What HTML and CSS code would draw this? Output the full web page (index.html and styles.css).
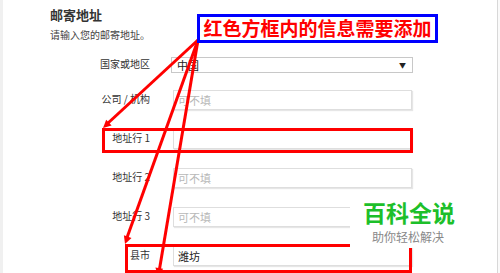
FILE: index.html
```html
<!DOCTYPE html>
<html lang="zh-CN">
<head>
    <meta charset="UTF-8">
    <title>邮寄地址</title>
    <link rel="stylesheet" href="styles.css">
</head>
<body>
<div class="page">
    <div class="content">
        <h2 class="title">邮寄地址</h2>
        <p class="desc">请输入您的邮寄地址。</p>
        <div class="form">
            <div class="row">
                <label class="label">国家或地区</label>
                <div class="select"><span>中国</span><span class="arrow">▼</span></div>
            </div>
            <div class="row">
                <label class="label">公司 / 机构</label>
                <input class="field" type="text" placeholder="可不填">
            </div>
            <div class="row">
                <label class="label">地址行 1</label>
                <input class="field" type="text">
            </div>
            <div class="row">
                <label class="label">地址行 2</label>
                <input class="field" type="text" placeholder="可不填">
            </div>
            <div class="row">
                <label class="label">地址行 3</label>
                <input class="field" type="text" placeholder="可不填">
            </div>
            <div class="row">
                <label class="label">县市</label>
                <input class="field" type="text" value="潍坊">
            </div>
        </div>
    </div>

    <!-- 标注层 -->
    <svg class="marks" width="500" height="273" viewBox="0 0 500 273">
        <g stroke="#ff0000" stroke-width="3" fill="none">
            <rect x="103.5" y="129.5" width="308" height="22"/>
            <rect x="126.5" y="245.5" width="284" height="26"/>
            <line x1="198" y1="40" x2="107" y2="124"/>
            <line x1="198" y1="40" x2="126.5" y2="239"/>
            <line x1="198" y1="40" x2="159" y2="272"/>
        </g>
        <g fill="#ff0000">
            <polygon points="103,128 111.6,125.5 106.2,119.7"/>
            <polygon points="125,244 131.5,237.9 123.9,235.2"/>
            <polygon points="158,276 163.2,268.7 155.4,267.5"/>
        </g>
    </svg>
    <div class="note">红色方框内的信息需要添加</div>
    <div class="logo">
        <div class="logo-name">百科全说</div>
        <div class="logo-sub">助你轻松解决</div>
    </div>
</div>
</body>
</html>
```

FILE: styles.css
```css
body,html{
    margin: 0;
    padding: 0;
    width: 100%;
    height: 100%;
    overflow: hidden;
    background-color: #fafafa;
}
.page{
    position: relative;
    width: 498px;
    height: 273px;
    box-sizing: border-box;
    border-left: 3px solid #f0f0f0;
    border-right: 1px solid #d8d8d8;
    background-color: #fff;
    font-family: "Noto Sans CJK SC", "Noto Sans", sans-serif;
    color: #333;
}
.content{
    padding: 6px 0 0 47px;
}
.title{
    margin: 0;
    font-size: 13px;
    line-height: 18px;
    font-weight: bold;
    color: #333;
}
.desc{
    margin: 4px 0 0;
    font-size: 10px;
    line-height: 14px;
    color: #444;
}
.form{
    margin-top: 15px;
}
.row{
    display: flex;
    align-items: center;
    height: 20px;
    margin-bottom: 19px;
}
.row:first-child{
    height: 16px;
    margin-bottom: 17px;
}
.label{
    width: 100px;
    text-align: right;
    font-size: 10px;
    color: #333;
    padding-bottom: 3px;
}
.select{
    margin-left: 21px;
    width: 242px;
    height: 16px;
    box-sizing: border-box;
    border: 1px solid #c8c8c8;
    display: flex;
    justify-content: space-between;
    align-items: center;
    padding: 0 6px 0 5px;
    font-size: 11px;
    color: #222;
}
.arrow{
    font-size: 7px;
}
.field{
    margin: 0 0 0 23px;
    width: 239px;
    height: 20px;
    box-sizing: border-box;
    border: 1px solid #dedede;
    box-shadow: 1px 1px 1px #e6e6e6;
    padding: 0 4px;
    font-family: "Noto Sans CJK SC", sans-serif;
    font-size: 11px;
    color: #222;
    outline: none;
}
.field::placeholder{
    color: #b8b8b8;
}
.marks{
    position: absolute;
    left: -3px;
    top: 0;
}
.note{
    position: absolute;
    left: 194px;
    top: 14px;
    width: 241px;
    height: 29px;
    box-sizing: border-box;
    border: 3px solid #0000ff;
    background-color: #fff;
    color: #ff0000;
    font-size: 19px;
    font-weight: bold;
    line-height: 22px;
    text-align: center;
    white-space: nowrap;
}
.logo{
    position: absolute;
    left: 347px;
    top: 195px;
    width: 112px;
    height: 53px;
    background-color: #fff;
    text-align: center;
}
.logo-name{
    font-size: 23px;
    font-weight: bold;
    color: #1dbf2a;
    padding-left: 6px;
}
.logo-sub{
    margin-top: -1px;
    font-size: 12px;
    color: #888;
    padding-left: 4px;
}
```
